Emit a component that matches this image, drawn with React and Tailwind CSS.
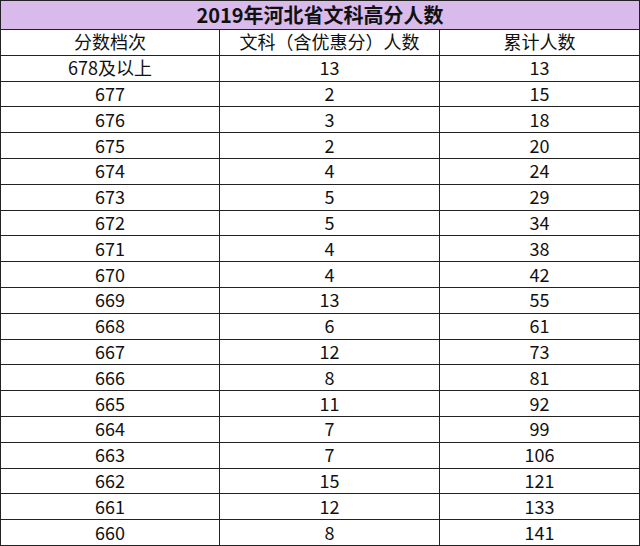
export default function App() {
  const rows = [
    ["678及以上", "13", "13"],
    ["677", "2", "15"],
    ["676", "3", "18"],
    ["675", "2", "20"],
    ["674", "4", "24"],
    ["673", "5", "29"],
    ["672", "5", "34"],
    ["671", "4", "38"],
    ["670", "4", "42"],
    ["669", "13", "55"],
    ["668", "6", "61"],
    ["667", "12", "73"],
    ["666", "8", "81"],
    ["665", "11", "92"],
    ["664", "7", "99"],
    ["663", "7", "106"],
    ["662", "15", "121"],
    ["661", "12", "133"],
    ["660", "8", "141"],
  ];
  const all = [["分数档次", "文科（含优惠分）人数", "累计人数"], ...rows];
  return (
    <div
      className="w-[640px] h-[546px] bg-white text-[#111] overflow-hidden"
      style={{ fontFamily: '"Noto Sans CJK SC", "Noto Sans", sans-serif' }}
    >
      <div className="w-[640px] h-[546px] border-l border-t border-[#222] grid grid-cols-[219px_220px_1fr] grid-rows-[29px_repeat(20,1fr)]">
        <div className="col-span-3 bg-[#d8bbea] border-r border-b border-[#222] flex items-center justify-center text-[20px] font-bold leading-none pb-[1px]">
          2019年河北省文科高分人数
        </div>
        {all.map((r, i) =>
          r.map((c, j) => (
            <div
              key={i + "-" + j}
              className="min-h-0 border-r border-b border-[#222] flex items-center justify-center text-[18px] leading-none pb-[2px]"
            >
              {c}
            </div>
          ))
        )}
      </div>
    </div>
  );
}
